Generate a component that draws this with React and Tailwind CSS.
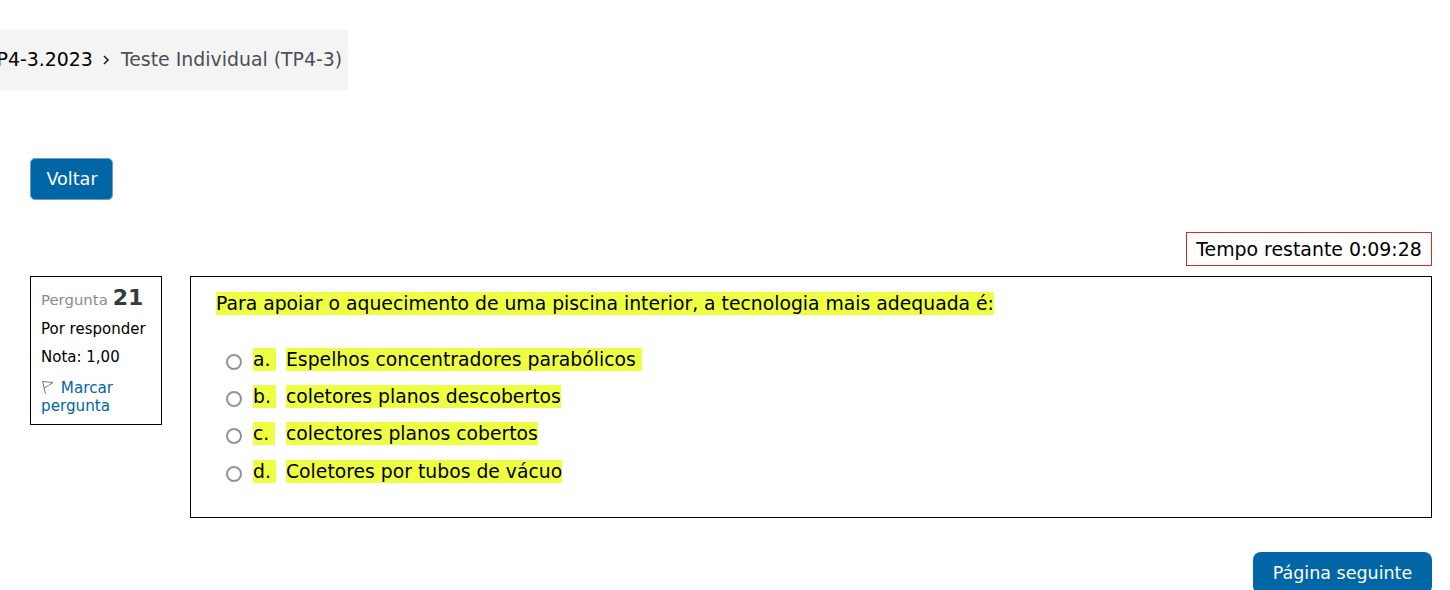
const FONT = "font-['DejaVu_Sans',sans-serif]";

function Option({ letter, text, trail, cls, labelCls }) {
  return (
    <div className={`flex items-start ${cls}`}>
      <span className="mt-[6px] ml-[35px] mr-[11px] h-4 w-4 shrink-0 rounded-full border-2 border-[#8f959e] bg-white" />
      <span className="flex text-[18.8px] leading-[23px] text-black">
        <span className={`${labelCls} bg-[#eeff41]`}>{letter}</span>
        <span className="bg-[#eeff41] whitespace-pre">{text}{trail ? " " : ""}</span>
      </span>
    </div>
  );
}

function Flag() {
  return (
    <svg width="13" height="15" viewBox="0 0 13 15" className="inline-block align-[-2px]" fill="none" stroke="#777" strokeWidth="1">
      <path d="M1.5 1 L4.5 14" />
      <path d="M1.5 1.5 L12 2.5 L7.5 5.5 L3 8" />
    </svg>
  );
}

export default function App() {
  return (
    <div className={`${FONT} h-[590px] w-[1450px] overflow-hidden bg-white`}>
      <div className="pt-[30px]">
        <div className="ml-[-15px] flex h-[60px] w-[363px] items-center bg-[#f4f4f4] pb-[2px] text-[18.9px] whitespace-nowrap">
          <span className="text-black">TP4-3.2023</span>
          <svg width="10" height="12" viewBox="0 0 10 12" className="ml-[8px] mr-[10px] mt-[2px]" fill="none" stroke="#222" strokeWidth="1.6">
            <path d="M3 2 L7 6 L3 10" />
          </svg>
          <span className="text-[#495057]">Teste Individual (TP4-3)</span>
        </div>
      </div>

      <button className="mt-[68px] ml-[30px] flex h-[42px] w-[83px] items-center justify-center rounded-[5px] border border-[#6f9fc2] bg-[#0066a6] pl-[1px] text-[17.6px] text-white">
        Voltar
      </button>

      <div className="mt-[32px] flex justify-end pr-[18px]">
        <div className="flex h-[34px] w-[246px] items-center justify-center border border-[#ca3120] text-[18.9px] text-black">
          Tempo restante 0:09:28
        </div>
      </div>

      <div className="mt-[10px] flex items-start pl-[30px] pr-[18px]">
        <div className="h-[149px] w-[132px] shrink-0 border border-black pl-[10px] pt-[8px]">
          <div className="flex items-baseline whitespace-nowrap">
            <span className="text-[14.9px] text-[#8c8c8c]">Pergunta</span>
            <span className="ml-[5px] text-[22px] font-bold leading-[26px] text-[#343a40]">21</span>
          </div>
          <div className="mt-[9px] text-[15px] leading-[18px] text-black whitespace-nowrap">Por responder</div>
          <div className="mt-[10px] text-[15px] leading-[18px] text-black">Nota: 1,00</div>
          <div className="mt-[13px] text-[15.2px] leading-[18px] text-[#0066a6]">
            <Flag /> <span className="ml-[2px]">Marcar</span>
            <br />
            pergunta
          </div>
        </div>

        <div className="ml-[28px] h-[242px] flex-1 border border-black pt-[15px]">
          <div className="ml-[25px] flex leading-[23px]">
            <span className="bg-[#eeff41] text-[18.8px] leading-[23px] text-black">
              Para apoiar o aquecimento de uma piscina interior, a tecnologia mais adequada é:
            </span>
          </div>
          <div className="mt-[33px]">
            <Option letter="a." labelCls="w-[23px] mr-[10px]" text="Espelhos concentradores parabólicos" trail cls="" />
            <Option letter="b." labelCls="w-[23px] mr-[10px]" text="coletores planos descobertos" cls="mt-[14px]" />
            <Option letter="c." labelCls="w-[22px] mr-[11px]" text="colectores planos cobertos" cls="mt-[14px]" />
            <Option letter="d." labelCls="w-[23px] mr-[10px]" text="Coletores por tubos de vácuo" cls="mt-[15px]" />
          </div>
        </div>
      </div>

      <div className="mt-[34px] flex justify-end pr-[18px]">
        <button className="h-[42px] w-[179px] shrink-0 rounded-[8px] bg-[#0066a6] text-[17.5px] text-white">
          Página seguinte
        </button>
      </div>
    </div>
  );
}
